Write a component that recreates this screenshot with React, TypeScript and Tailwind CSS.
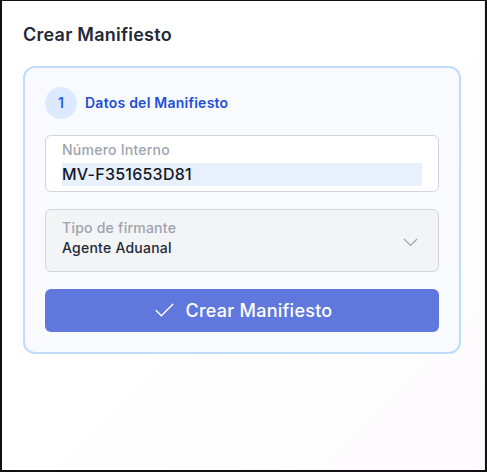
import { Check } from 'lucide-react';

const App = () => {
  return (
    <div className="w-[487px] h-[472px] overflow-hidden border-t border-l-2 border-r-2 border-b-2 border-[#111] bg-gradient-to-br from-white via-white to-[#fdfbfd] font-['Inter','Noto_Sans',sans-serif] tracking-[0.015em]">
      <div className="h-full border-r border-[#ececef] pl-[21px] pt-5">
        <h2 className="text-lg leading-7 font-semibold text-[#1f2937] mb-[17px]">Crear Manifiesto</h2>

        <div className="w-[438px] rounded-xl border-2 border-[#bfdbfe] bg-[#f8fafd] px-5 pt-[19px] pb-5">
          {/* Step header */}
          <div className="flex items-center gap-2">
            <div className="w-8 h-8 rounded-full bg-[#dbeafe] flex items-center justify-center text-sm font-semibold text-[#2563eb]">
              1
            </div>
            <span className="text-sm font-semibold text-[#1d4ed8]">Datos del Manifiesto</span>
          </div>

          <div className="mt-4 flex flex-col gap-[17px]">
            {/* Internal number */}
            <div className="h-[57px] rounded-md border border-[#d1d5db] bg-white px-4 pt-1">
              <div className="text-sm leading-5 font-medium text-[#9ca3af]">Número Interno</div>
              <div className="mt-[3px] h-[23px] bg-[#e8f0fb] text-base leading-[23px] font-medium text-[#111827]">MV-F351653D81</div>
            </div>

            {/* Signer type */}
            <div className="h-[63px] rounded-md border border-[#d1d5db] bg-[#f3f4f6] pl-4 pr-5 pt-2 flex items-start justify-between">
              <div>
                <div className="text-sm leading-5 font-medium text-[#9ca3af]">Tipo de firmante</div>
                <div className="text-sm leading-5 font-medium text-[#1f2937]">Agente Aduanal</div>
              </div>
              <svg width="15" height="9" viewBox="0 0 15 9" className="mt-[20px] text-[#9ca3af]" fill="none">
                <path d="M1 1l6.5 6.5L14 1" stroke="currentColor" strokeWidth="1.2" />
              </svg>
            </div>

            {/* Submit */}
            <button className="h-[43px] rounded-md bg-[#6078dd] text-white flex items-center justify-center gap-[9px]">
              <Check size={25} strokeWidth={1.4} />
              <span className="text-lg font-medium">Crear Manifiesto</span>
            </button>
          </div>
        </div>
      </div>
    </div>
  );
};

export default App;
